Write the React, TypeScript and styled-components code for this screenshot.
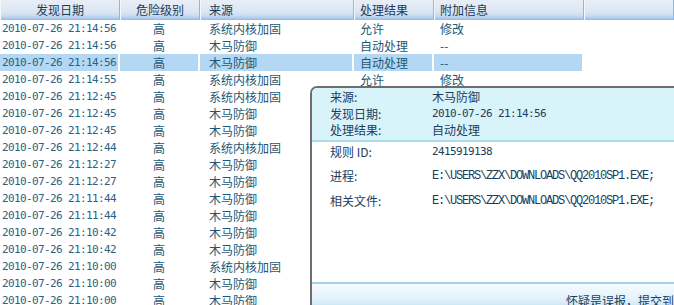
import React from "react";
import styled, { createGlobalStyle } from "styled-components";

const Global = createGlobalStyle`
  html, body { margin: 0; padding: 0; background: #fff; overflow: hidden; }
  body { font-family: "Noto Sans CJK SC", "DejaVu Sans", sans-serif; }
`;

const Page = styled.div`
  position: relative;
  width: 674px;
  height: 305px;
  overflow: hidden;
  background: #fff;
`;

const Grid = styled.div`
  display: grid;
  grid-template-columns: 120px 80px 154px 80px 150px 90px;
`;

const HeadCell = styled.div<{ $align?: "center" | "left"; $pad?: number }>`
  height: 20px;
  box-sizing: border-box;
  display: flex;
  align-items: center;
  justify-content: ${(p) => (p.$align === "left" ? "flex-start" : "center")};
  padding-left: ${(p) => p.$pad ?? 0}px;
  background: linear-gradient(to bottom, #e8eef6 0%, #dce6f2 55%, #cddff2 75%, #abcaee 92%, #8fb6e6 100%);
  border-left: 1px solid #f4f8fc;
  border-right: 1px solid #8db7e6;
  font-size: 12px;
  color: #1b3a58;
  line-height: 1;
`;

const Cell = styled.div<{ $align?: "center" | "left"; $pad?: number; $sel?: boolean; $mono?: boolean }>`
  height: 17px;
  box-sizing: border-box;
  display: flex;
  align-items: center;
  justify-content: ${(p) => (p.$align === "left" ? "flex-start" : "center")};
  padding-left: ${(p) => p.$pad ?? 0}px;
  background: ${(p) => (p.$sel ? "#b4d8f3" : "#fff")};
  border-right: 2px solid #fff;
  color: ${(p) => (p.$mono ? "#2a6282" : "#1d5776")};
  white-space: nowrap;
  font-family: ${(p) =>
    p.$mono ? `"DejaVu Sans Mono", monospace` : `"Noto Sans CJK SC", sans-serif`};
  font-size: ${(p) => (p.$mono ? "11px" : "12px")};
  letter-spacing: ${(p) => (p.$mono ? "-0.62px" : "0")};
  line-height: 1;
`;

const Popup = styled.div`
  position: absolute;
  left: 310px;
  top: 86px;
  width: 400px;
  height: 240px;
  box-sizing: border-box;
  border-top: 2px solid #6e6e6e;
  border-left: 2px solid #6e6e6e;
  border-top-left-radius: 7px;
  background: #fff;
  display: flex;
  flex-direction: column;
  overflow: hidden;
`;

const PopHead = styled.div`
  background: #d9f3fa;
  border-bottom: 2px solid #a9dcee;
  padding: 1px 0 0 18px;
  height: 54px;
  box-sizing: border-box;
  display: flex;
  flex-direction: column;
  justify-content: flex-start;
`;

const InfoRow = styled.div<{ $h: number }>`
  display: grid;
  grid-template-columns: 102px 1fr;
  height: ${(p) => p.$h}px;
  align-items: center;
  color: #1d3d5a;
  font-size: 12px;
  line-height: 1;
`;

const Label = styled.span`
  font-family: "Noto Sans CJK SC", sans-serif;
  font-size: 12px;
  white-space: nowrap;
`;

const Value = styled.span<{ $font?: "cjk" | "mono" | "serif" }>`
  white-space: nowrap;
  font-family: ${(p) =>
    p.$font === "mono"
      ? `"DejaVu Sans Mono", monospace`
      : p.$font === "serif"
      ? `"Liberation Mono", monospace`
      : `"Noto Sans CJK SC", sans-serif`};
  font-size: ${(p) => (p.$font === "mono" ? "11px" : "12px")};
  letter-spacing: ${(p) =>
    p.$font === "mono" ? "-0.62px" : p.$font === "serif" ? "-1.2px" : "0"};
`;

const PopBody = styled.div`
  padding: 1px 0 0 18px;
  flex: 1;
  display: flex;
  flex-direction: column;
`;

const PopFooter = styled.div`
  height: 44px;
  flex: none;
  border-top: 2px solid #9ed4ee;
  background: linear-gradient(to bottom, #f6fbfe 0%, #e2f2fc 35%, #c2e3f7 60%, #b5dcf5 100%);
  display: flex;
  padding-left: 254px;
  padding-top: 11px;
  box-sizing: border-box;
  font-size: 12px;
  line-height: 1;
  color: #1d3d5a;
  white-space: nowrap;
`;

type Row = { time: string; src: string; res: string; info: string };
const S = "系统内核加固";
const T = "木马防御";
const rows: Row[] = [
  { time: "21:14:56", src: S, res: "允许", info: "修改" },
  { time: "21:14:56", src: T, res: "自动处理", info: "--" },
  { time: "21:14:56", src: T, res: "自动处理", info: "--" },
  { time: "21:14:55", src: S, res: "允许", info: "修改" },
  { time: "21:12:45", src: S, res: "允许", info: "修改" },
  { time: "21:12:45", src: T, res: "自动处理", info: "--" },
  { time: "21:12:45", src: T, res: "自动处理", info: "--" },
  { time: "21:12:44", src: S, res: "允许", info: "修改" },
  { time: "21:12:27", src: T, res: "自动处理", info: "--" },
  { time: "21:12:27", src: T, res: "自动处理", info: "--" },
  { time: "21:11:44", src: T, res: "自动处理", info: "--" },
  { time: "21:11:44", src: T, res: "自动处理", info: "--" },
  { time: "21:10:42", src: T, res: "自动处理", info: "--" },
  { time: "21:10:42", src: T, res: "自动处理", info: "--" },
  { time: "21:10:00", src: S, res: "允许", info: "修改" },
  { time: "21:10:00", src: T, res: "自动处理", info: "--" },
  { time: "21:10:00", src: T, res: "自动处理", info: "--" },
];

const SELECTED = 2;
const PATH = "E:\\USERS\\ZZX\\DOWNLOADS\\QQ2010SP1.EXE;";

export default function App() {
  return (
    <Page>
      <Global />
      <Grid>
        <HeadCell>发现日期</HeadCell>
        <HeadCell>危险级别</HeadCell>
        <HeadCell $align="left" $pad={8}>来源</HeadCell>
        <HeadCell $align="left" $pad={5}>处理结果</HeadCell>
        <HeadCell $align="left" $pad={5}>附加信息</HeadCell>
        <HeadCell />
        {rows.map((r, i) => {
          const sel = i === SELECTED;
          return (
            <React.Fragment key={i}>
              <Cell $mono $sel={sel}>2010-07-26 {r.time}</Cell>
              <Cell $sel={sel}>高</Cell>
              <Cell $align="left" $pad={9} $sel={sel}>{r.src}</Cell>
              <Cell $align="left" $pad={6} $sel={sel}>{r.res}</Cell>
              <Cell $align="left" $pad={6} $sel={sel}>{r.info}</Cell>
              <Cell />
            </React.Fragment>
          );
        })}
      </Grid>
      <Popup>
        <PopHead>
          <InfoRow $h={16.5}>
            <Label>来源:</Label>
            <Value>木马防御</Value>
          </InfoRow>
          <InfoRow $h={16.5}>
            <Label>发现日期:</Label>
            <Value $font="mono">2010-07-26 21:14:56</Value>
          </InfoRow>
          <InfoRow $h={16.5}>
            <Label>处理结果:</Label>
            <Value>自动处理</Value>
          </InfoRow>
        </PopHead>
        <PopBody>
          <InfoRow $h={17}>
            <Label>规则 ID:</Label>
            <Value $font="mono">2415919138</Value>
          </InfoRow>
          <InfoRow $h={32}>
            <Label>进程:</Label>
            <Value $font="serif">{PATH}</Value>
          </InfoRow>
          <InfoRow $h={17}>
            <Label>相关文件:</Label>
            <Value $font="serif">{PATH}</Value>
          </InfoRow>
        </PopBody>
        <PopFooter>怀疑是误报，提交到</PopFooter>
      </Popup>
    </Page>
  );
}
